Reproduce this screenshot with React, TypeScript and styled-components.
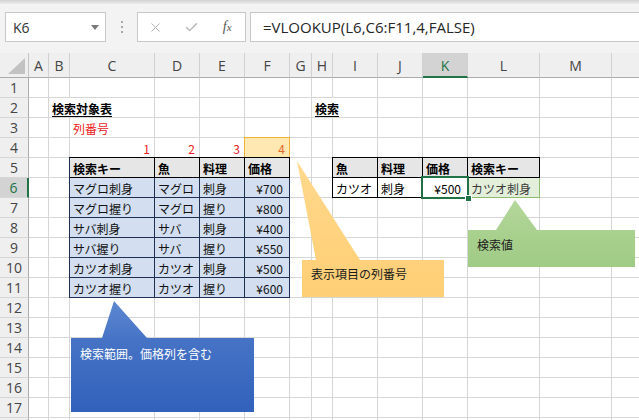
import styled, { createGlobalStyle } from "styled-components";
import { X, Check } from "lucide-react";

const COLUMNS = [
  { key: "A", width: 20 },
  { key: "B", width: 21 },
  { key: "C", width: 85 },
  { key: "D", width: 45 },
  { key: "E", width: 45 },
  { key: "F", width: 45 },
  { key: "G", width: 22 },
  { key: "H", width: 21 },
  { key: "I", width: 45 },
  { key: "J", width: 45 },
  { key: "K", width: 45 },
  { key: "L", width: 72 },
  { key: "M", width: 72 },
  { key: "N", width: 72 },
];
const ROW_COUNT = 18;
const ACTIVE_COL = "K";
const ACTIVE_ROW = 6;
const RED = "#ec1c24";

type CellSpec = {
  text: string;
  span?: number;
  bold?: boolean;
  underline?: boolean;
  align?: "left" | "right";
  color?: string;
  marker?: boolean;
};

const CELLS: Record<string, CellSpec> = {
  B2: { text: "検索対象表", span: 2, bold: true, underline: true },
  H2: { text: "検索", span: 2, bold: true, underline: true },
  C3: { text: "列番号", color: RED },
  C4: { text: "1", align: "right", color: RED },
  D4: { text: "2", align: "right", color: RED },
  E4: { text: "3", align: "right", color: RED },
  F4: { text: "4", align: "right", color: "#e8652c", marker: true },
};

const SOURCE_HEAD = ["検索キー", "魚", "料理", "価格"];
const SOURCE_ROWS = [
  ["マグロ刺身", "マグロ", "刺身", "¥700"],
  ["マグロ握り", "マグロ", "握り", "¥800"],
  ["サバ刺身", "サバ", "刺身", "¥400"],
  ["サバ握り", "サバ", "握り", "¥550"],
  ["カツオ刺身", "カツオ", "刺身", "¥500"],
  ["カツオ握り", "カツオ", "握り", "¥600"],
];
const LOOKUP_HEAD = ["魚", "料理", "価格", "検索キー"];

function App() {
  const rows = Array.from({ length: ROW_COUNT }, (_, i) => i + 1);

  return (
    <>
      <GlobalStyle />
      <Window>
        <TopStrip />
        <FormulaBar>
          <NameBox>
            K6
            <Caret />
          </NameBox>
          <Grip>
            <Dot />
            <Dot />
            <Dot />
          </Grip>
          <FxBox>
            <IconSlot>
              <X size={15} strokeWidth={1.6} color="#b4b4b4" />
            </IconSlot>
            <IconSlot>
              <Check size={15} strokeWidth={2.2} color="#b4b4b4" />
            </IconSlot>
            <IconSlot>
              <Fx>
                f<small>x</small>
              </Fx>
            </IconSlot>
          </FxBox>
          <FormulaInput>=VLOOKUP(L6,C6:F11,4,FALSE)</FormulaInput>
        </FormulaBar>

        <SheetArea>
          <Sheet>
            <Corner />
            {COLUMNS.map((col) => (
              <ColHeader key={col.key} $active={col.key === ACTIVE_COL}>
                {col.key}
              </ColHeader>
            ))}

            {rows.map((row) => {
              const items = [
                <RowHeader key={`h${row}`} $active={row === ACTIVE_ROW}>
                  {row}
                </RowHeader>,
              ];
              let skip = 0;
              COLUMNS.forEach((col, ci) => {
                if (skip > 0) {
                  skip--;
                  return;
                }
                const spec = CELLS[`${col.key}${row}`];
                const span = spec?.span ?? 1;
                skip = span - 1;
                items.push(
                  <Cell
                    key={`${col.key}${row}`}
                    style={{ gridColumn: `${ci + 2} / span ${span}`, gridRow: row + 1 }}
                    $align={spec?.align}
                    $bold={spec?.bold}
                    $underline={spec?.underline}
                    $color={spec?.color}
                    $marker={spec?.marker}
                  >
                    {spec && <span>{spec.text}</span>}
                  </Cell>
                );
              });
              return items;
            })}

            <DataTable $area="6 / 4 / 13 / 8" $cols="85px 45px 45px 45px" $edge="#1f2f52">
              {SOURCE_HEAD.map((h) => (
                <HeadCell key={h}>{h}</HeadCell>
              ))}
              {SOURCE_ROWS.map((r) =>
                r.map((v, i) => (
                  <BodyCell key={r[0] + i} $tone="blue" $align={i === 3 ? "right" : "left"}>
                    {v}
                  </BodyCell>
                ))
              )}
            </DataTable>

            <DataTable $area="6 / 10 / 8 / 14" $cols="45px 45px 45px 72px" $edge="#000">
              {LOOKUP_HEAD.map((h) => (
                <HeadCell key={h}>{h}</HeadCell>
              ))}
              <BodyCell $tone="plain">カツオ</BodyCell>
              <BodyCell $tone="plain">刺身</BodyCell>
              <BodyCell $tone="plain" $align="right">
                ¥500
              </BodyCell>
              <BodyCell $tone="green">カツオ刺身</BodyCell>
            </DataTable>

            <Selection />
          </Sheet>

          <Callout
            $x={71}
            $y={248}
            $w={183}
            $h={111}
            $clip="43px 0, 76px 37px, 183px 37px, 183px 111px, 0 111px, 0 37px, 31px 37px"
            $bg="linear-gradient(180deg, #5d88d1 0%, #4673c5 35%, #3161bb 100%)"
            $ink="#fff"
            $pad="45px 0 0 9px"
          >
            検索範囲。価格列を含む
          </Callout>
          <Callout
            $x={297}
            $y={108}
            $w={147}
            $h={136}
            $clip="0 0, 63px 99px, 147px 99px, 147px 136px, 5px 136px, 5px 99px, 19px 99px"
            $bg="linear-gradient(180deg, #ffd98e 0%, #ffd27d 60%, #ffcf76 100%)"
            $ink="#1a1a1a"
            $pad="105px 0 0 14px"
          >
            表示項目の列番号
          </Callout>
          <Callout
            $x={468}
            $y={147}
            $w={167}
            $h={67}
            $clip="47px 0, 69px 30px, 167px 30px, 167px 67px, 0 67px, 0 30px, 28px 30px"
            $bg="linear-gradient(180deg, #b4d79c 0%, #a8d08d 55%, #9fcb86 100%)"
            $ink="#1a1a1a"
            $pad="37px 0 0 9px"
          >
            検索値
          </Callout>
        </SheetArea>
      </Window>
    </>
  );
}

const GlobalStyle = createGlobalStyle`
  html, body {
    margin: 0;
    padding: 0;
    background: #fff;
  }
  body {
    font-family: "Noto Sans CJK JP", sans-serif;
  }
`;

const Window = styled.div`
  width: 639px;
  height: 420px;
  overflow: hidden;
  background: #f3f3f3;
  display: flex;
  flex-direction: column;
`;

const TopStrip = styled.div`
  height: 4px;
  flex: none;
  background: linear-gradient(180deg, #d2d2d2, #ebebeb);
`;

const FormulaBar = styled.div`
  flex: none;
  display: flex;
  align-items: stretch;
  height: 30px;
  margin: 8px 0 11px 5px;
  font-family: "Open Sans", "Noto Sans", sans-serif;
`;

const NameBox = styled.div`
  width: 101px;
  box-sizing: border-box;
  border: 1px solid #c8c8c8;
  background: #fff;
  display: flex;
  align-items: center;
  justify-content: space-between;
  padding: 0 6px 0 7px;
  font-size: 14px;
  color: #333;
`;

const Caret = styled.span`
  width: 0;
  height: 0;
  border-left: 4px solid transparent;
  border-right: 4px solid transparent;
  border-top: 5px solid #7a7a7a;
`;

const Grip = styled.div`
  width: 31px;
  display: flex;
  flex-direction: column;
  align-items: center;
  justify-content: center;
  gap: 3px;
`;

const Dot = styled.span`
  width: 2px;
  height: 2px;
  background: #a8a8a8;
`;

const FxBox = styled.div`
  width: 109px;
  box-sizing: border-box;
  border: 1px solid #c8c8c8;
  background: #fff;
  display: flex;
  align-items: center;
`;

const IconSlot = styled.div`
  width: 36px;
  display: flex;
  justify-content: center;
  align-items: center;
`;

const Fx = styled.span`
  font-family: "Liberation Serif", serif;
  font-style: italic;
  font-size: 14px;
  color: #555;
  small {
    font-size: 11px;
  }
`;

const FormulaInput = styled.div`
  flex: 1;
  margin-left: 4px;
  border: 1px solid #c8c8c8;
  border-right: none;
  background: #fff;
  padding-left: 12px;
  display: flex;
  align-items: center;
  font-size: 15px;
  color: #262626;
  white-space: nowrap;
`;

const SheetArea = styled.div`
  position: relative;
  flex: none;
`;

const Sheet = styled.div`
  display: grid;
  grid-template-columns: 29px ${COLUMNS.map((c) => `${c.width}px`).join(" ")};
  grid-template-rows: 25px repeat(${ROW_COUNT}, 20px);
  width: max-content;
  background: #fff;
`;

const Corner = styled.div`
  position: relative;
  background: #efefef;
  border-right: 1px solid #c4c4c4;
  border-bottom: 1px solid #ababab;
  &::after {
    content: "";
    position: absolute;
    right: 3px;
    bottom: 3px;
    width: 17px;
    height: 16px;
    background: #c2c2c2;
    clip-path: polygon(100% 0, 100% 100%, 0 100%);
  }
`;

const ColHeader = styled.div<{ $active?: boolean }>`
  box-sizing: border-box;
  display: flex;
  align-items: center;
  justify-content: center;
  font-family: "Open Sans", "Noto Sans", sans-serif;
  font-size: 14px;
  color: ${(p) => (p.$active ? "#217346" : "#444")};
  background: ${(p) => (p.$active ? "#d3d3d3" : "#efefef")};
  border-right: 1px solid #d0d0d0;
  border-bottom: ${(p) => (p.$active ? "2px solid #217346" : "1px solid #ababab")};
  padding-top: ${(p) => (p.$active ? "1px" : "0")};
`;

const RowHeader = styled.div<{ $active?: boolean }>`
  box-sizing: border-box;
  display: flex;
  align-items: center;
  justify-content: center;
  font-family: "Open Sans", "Noto Sans", sans-serif;
  font-size: 14px;
  color: ${(p) => (p.$active ? "#217346" : "#444")};
  background: ${(p) => (p.$active ? "#d3d3d3" : "#efefef")};
  border-right: ${(p) => (p.$active ? "2px solid #217346" : "1px solid #ababab")};
  border-bottom: 1px solid #d6d6d6;
`;

const Cell = styled.div<{
  $align?: "left" | "right";
  $bold?: boolean;
  $underline?: boolean;
  $color?: string;
  $marker?: boolean;
}>`
  box-sizing: border-box;
  border-right: 1px solid ${(p) => (p.$marker ? "#f2b13d" : "#d6d6d6")};
  border-bottom: 1px solid ${(p) => (p.$marker ? "#f2b13d" : "#d6d6d6")};
  ${(p) => p.$marker && "border-left: 1px solid #f2b13d; border-top: 1px solid #f2b13d; margin: -1px 0 0 -1px;"}
  background: ${(p) => (p.$marker ? "#ffe8b2" : "transparent")};
  display: flex;
  align-items: center;
  justify-content: ${(p) => (p.$align === "right" ? "flex-end" : "flex-start")};
  padding: 1px 4px 0 3px;
  font-size: 12px;
  white-space: nowrap;
  color: ${(p) => p.$color ?? "#000"};
  font-weight: ${(p) => (p.$bold ? 700 : 400)};
  span {
    text-decoration: ${(p) => (p.$underline ? "underline" : "none")};
    text-underline-offset: 2px;
  }
`;

const DataTable = styled.div<{ $area: string; $cols: string; $edge: string }>`
  grid-area: ${(p) => p.$area};
  margin: -1px 0 0 -1px;
  display: grid;
  grid-template-columns: ${(p) => p.$cols};
  grid-auto-rows: 20px;
  border-top: 1px solid #000;
  border-left: 1px solid ${(p) => p.$edge};
  background: #fff;
`;

const HeadCell = styled.div`
  box-sizing: border-box;
  background: #e7e6e6;
  border-right: 1px solid #000;
  border-bottom: 1px solid #000;
  display: flex;
  align-items: center;
  padding: 1px 3px 0;
  font-size: 12px;
  font-weight: 700;
  color: #000;
  white-space: nowrap;
`;

const TONES = {
  blue: { bg: "#d3dff0", line: "#1f2f52", ink: "#111" },
  plain: { bg: "#fff", line: "#000", ink: "#000" },
  green: { bg: "#e3efda", line: "#8dbd6c", ink: "#3a3a3a" },
};

const BodyCell = styled.div<{ $tone: keyof typeof TONES; $align?: "left" | "right" }>`
  box-sizing: border-box;
  background: ${(p) => TONES[p.$tone].bg};
  border-right: 1px solid ${(p) => TONES[p.$tone].line};
  border-bottom: 1px solid ${(p) => TONES[p.$tone].line};
  display: flex;
  align-items: center;
  justify-content: ${(p) => (p.$align === "right" ? "flex-end" : "flex-start")};
  padding: 1px ${(p) => (p.$align === "right" ? "6px" : "3px")} 0 3px;
  font-size: 12px;
  color: ${(p) => TONES[p.$tone].ink};
  white-space: nowrap;
`;

const Selection = styled.div`
  grid-column: 12;
  grid-row: 7;
  margin: -2px -1px -1px -2px;
  border: 2px solid #217346;
  position: relative;
  z-index: 2;
  &::after {
    content: "";
    position: absolute;
    right: -5px;
    bottom: -5px;
    width: 5px;
    height: 5px;
    background: #217346;
    border: 1px solid #fff;
  }
`;

const Callout = styled.div<{
  $x: number;
  $y: number;
  $w: number;
  $h: number;
  $clip: string;
  $bg: string;
  $ink: string;
  $pad: string;
}>`
  position: absolute;
  left: ${(p) => p.$x}px;
  top: ${(p) => p.$y}px;
  width: ${(p) => p.$w}px;
  height: ${(p) => p.$h}px;
  box-sizing: border-box;
  padding: ${(p) => p.$pad};
  clip-path: polygon(${(p) => p.$clip});
  background: ${(p) => p.$bg};
  color: ${(p) => p.$ink};
  font-size: 12px;
  line-height: 16px;
  white-space: nowrap;
  z-index: 4;
`;

export default App;
